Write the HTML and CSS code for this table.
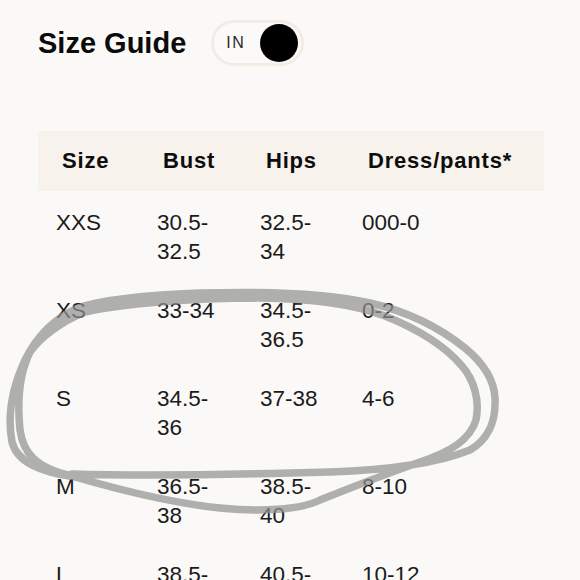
FILE: index.html
```html
<!DOCTYPE html>
<html>
<head>
<meta charset="utf-8">
<link rel="stylesheet" href="styles.css">
</head>
<body>
<div class="page">
  <div class="top">
    <h1 class="title">Size Guide</h1>
    <div class="toggle"><span class="toggle-label">IN</span><span class="knob"></span></div>
  </div>
  <div class="table">
    <div class="row head">
      <div>Size</div><div>Bust</div><div>Hips</div><div>Dress/pants*</div>
    </div>
    <div class="row">
      <div>XXS</div><div>30.5-<br>32.5</div><div>32.5-<br>34</div><div>000-0</div>
    </div>
    <div class="row">
      <div>XS</div><div>33-34</div><div>34.5-<br>36.5</div><div>0-2</div>
    </div>
    <div class="row">
      <div>S</div><div>34.5-<br>36</div><div>37-38</div><div>4-6</div>
    </div>
    <div class="row">
      <div>M</div><div>36.5-<br>38</div><div>38.5-<br>40</div><div>8-10</div>
    </div>
    <div class="row">
      <div>L</div><div>38.5-<br>40</div><div>40.5-<br>42</div><div>10-12</div>
    </div>
  </div>
  <svg class="scribble" width="580" height="580" viewBox="0 0 580 580">
    <path d="M72,474 C140,476 260,474 330,472 C390,470 440,462 470,450 C490,438 496,420 495,398 C494,378 482,362 465,348 C440,328 410,312 370,303 C330,294 270,291 200,293 C150,295 100,300 78,308 C55,318 38,334 25,360 C12,388 7,415 12,442 C17,462 40,472 75,477 C120,490 170,503 220,508 C260,512 300,510 320,500 C340,492 380,476 420,462 C450,452 470,440 476,420 C480,400 474,380 462,366 C445,346 420,330 385,316 C350,303 310,299 260,298 C190,298 120,304 85,312 C60,322 40,338 30,352 C20,372 17,400 20,430 C23,452 35,468 72,476" />
  </svg>
</div>
</body>
</html>
```
FILE: styles.css
```css
* { box-sizing: border-box; }
html, body { margin: 0; padding: 0; }
body {
  background: #faf9f7;
  font-family: "Liberation Sans", Arial, sans-serif;
  color: #161616;
  width: 580px;
  height: 580px;
  overflow: hidden;
}
.page { position: relative; width: 580px; height: 580px; }
.top {
  display: flex;
  align-items: center;
  gap: 25px;
  padding: 20px 0 0 38px;
}
.title {
  margin: 0;
  font-size: 29px;
  font-weight: 700;
  color: #0b0b0b;
  line-height: 46px;
}
.toggle {
  display: flex;
  align-items: center;
  justify-content: space-between;
  width: 93px;
  height: 46px;
  border: 3px solid #f2ece3;
  border-radius: 23px;
  background: #fbfaf8;
  padding: 0 3px 0 12px;
}
.toggle-label {
  font-size: 16px;
  letter-spacing: 1.5px;
  color: #2a2a2a;
  font-weight: 400;
}
.knob {
  width: 38px;
  height: 38px;
  border-radius: 50%;
  background: #000;
}
.table {
  margin: 65px 36px 0 38px;
}
.row {
  display: grid;
  grid-template-columns: 101px 103px 102px 1fr;
  padding: 17px 0 13px 18px;
  font-size: 22.5px;
  line-height: 29px;
  color: #1b1b1b;
}
.row.head {
  background: #f7f2ec;
  padding: 15px 0 16px 24px;
  font-size: 22px;
  font-weight: 700;
  color: #0d0d0d;
  letter-spacing: 0.8px;
}
.scribble {
  position: absolute;
  top: 0;
  left: 0;
  pointer-events: none;
}
.scribble path {
  fill: none;
  stroke: rgba(145, 145, 145, 0.72);
  stroke-width: 7.5;
  stroke-linecap: round;
  stroke-linejoin: round;
}
```
